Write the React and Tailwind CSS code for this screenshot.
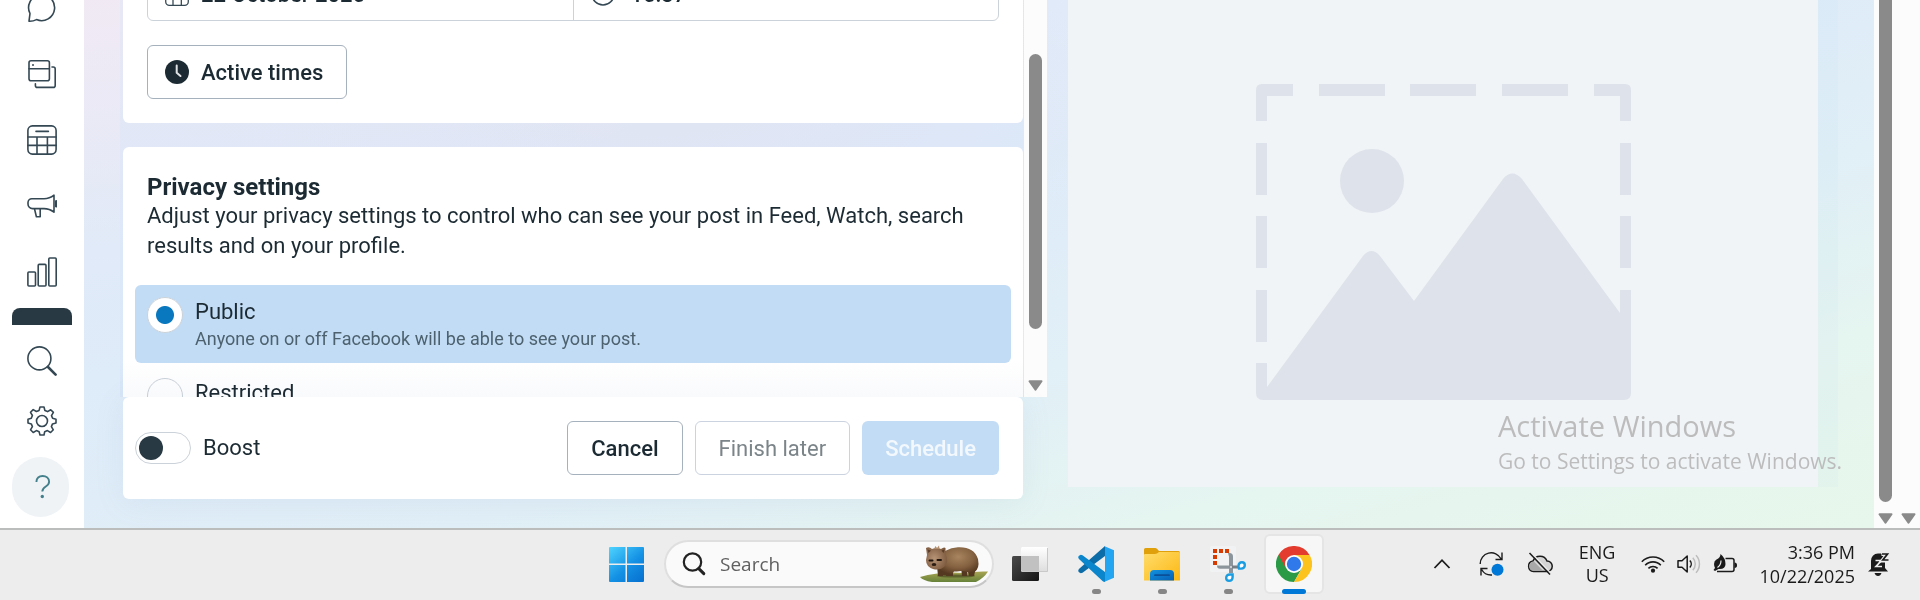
import React from "react";

const line = { fill: "none", stroke: "#344854", strokeWidth: 1.6, strokeLinejoin: "round", strokeLinecap: "round" };

function ChatIcon() {
  return (
    <svg width="30" height="30" viewBox="0 0 30 30" {...line}>
      <path d="M2 28.2 3 20.5A13 13 0 1 1 9.5 26.6Q6 28.4 2 28.2Z" />
    </svg>
  );
}
function WindowsIcon() {
  return (
    <svg width="30" height="30" viewBox="0 0 30 30" {...line}>
      <rect x="2" y="1.8" width="20.4" height="20" rx="2" />
      <path d="M2 9.8h20.4M25 8h1.2a2 2 0 0 1 2 2v16.4a2 2 0 0 1-2 2H10.4a2 2 0 0 1-2-2v-1.6" />
      <circle cx="6" cy="6" r="1" fill="#344854" stroke="none" />
    </svg>
  );
}
function CalendarIcon({ size }) {
  return (
    <svg width={size} height={size} viewBox="0 0 30 30" className="shrink-0" {...line}>
      <rect x="0.9" y="0.9" width="28.2" height="28.2" rx="4.5" />
      <path d="M0.9 12h28.2M0.9 20.4h28.2M10 12v17M20.4 12v17M9 6.4h12.4" />
    </svg>
  );
}
function MegaphoneIcon() {
  return (
    <svg width="30" height="30" viewBox="0 0 30 30" {...line}>
      <path d="M27 4.2V21.200Q22.500 17.600 17 17.600H5.500A4.500 4.500 0 0 1 1 13V11.500A3.800 3.800 0 0 1 4.800 7.800H17Q22.500 7.800 27 4.200Z" />
      <path d="M7.600 18.200 9.400 25.800H13.200V18.200" />
      <path d="M29.200 10.200v5" strokeWidth="2.400" />
    </svg>
  );
}
function BarsIcon() {
  return (
    <svg width="30" height="30" viewBox="0 0 30 30" {...line}>
      <rect x="0.9" y="15" width="7.600" height="14" rx="1" />
      <rect x="11.200" y="7.400" width="7.800" height="21.600" rx="1" />
      <rect x="21.800" y="1" width="7.400" height="28" rx="1" />
    </svg>
  );
}
function FindIcon() {
  return (
    <svg width="30" height="30" viewBox="0 0 30 30" {...line}>
      <circle cx="12.400" cy="12.400" r="11.500" />
      <path d="M21 21 28.600 28.600" strokeWidth="2.600" />
    </svg>
  );
}
function GearIcon() {
  return (
    <svg width="30" height="30" viewBox="0 0 30 30" {...line}>
      <circle cx="15" cy="15" r="5.500" />
      <path d="M13 1h4l.9 3.500 2.700 1.100 3.100-1.900 2.700 2.700-1.900 3.200 1.100 2.700L29 13.200v3.800l-3.500.9-1.100 2.700 1.900 3.200-2.700 2.700-3.200-1.900-2.700 1.100L17 29h-4l-.9-3.300-2.700-1.100-3.200 1.900-2.700-2.700 1.900-3.200-1.100-2.700L1 17v-3.800l3.300-1 1.100-2.700-1.900-3.200 2.700-2.700 3.200 1.900 2.700-1.100Z" />
    </svg>
  );
}
function QuestionIcon() {
  return (
    <svg width="16" height="24" viewBox="0 0 16 24" fill="none" stroke="#43808b" strokeWidth="1.900">
      <path d="M1.400 7C1.400 3 4 1 7.600 1s6.500 2.200 6.500 5.800c0 5.400-6.800 4-6.800 9.800" />
      <circle cx="7.300" cy="21.500" r="1.700" fill="#43808b" stroke="none" />
    </svg>
  );
}
function SolidClock() {
  return (
    <svg width="24" height="24" viewBox="0 0 24 24">
      <circle cx="12" cy="12" r="12" fill="#1c2b33" />
      <path d="M11.700 5.500v7.200l3.800 3.300" fill="none" stroke="#dfe3e6" strokeWidth="2" strokeLinecap="round" strokeLinejoin="round" />
    </svg>
  );
}
function OutlineClock() {
  return (
    <svg width="24" height="24" viewBox="0 0 24 24" className="shrink-0" {...line}>
      <circle cx="12" cy="12" r="11" />
      <path d="M12 5.500V12l4 3" />
    </svg>
  );
}
function DownArrow() {
  return (
    <svg width="15" height="11" viewBox="0 0 15 11">
      <path d="M1.500 1.200h12L7.500 9.600Z" fill="#8a8a8a" stroke="#8a8a8a" strokeWidth="2" strokeLinejoin="round" />
    </svg>
  );
}

function Placeholder() {
  return (
    <svg viewBox="0 0 375 316" className="w-1/2" aria-hidden="true">
      <g fill="#dee2ea">
        <path d="M0 37V6Q0 0 6 0H37V12H11V37Z" />
        <path d="M375 37V6Q375 0 369 0H338V12H364V37Z" />
        <path d="M63 0h66v12H63zM154 0h66v12h-66zM246 0h66v12h-66z" />
        <path d="M0 59h11v52H0zM0 132h11v52H0zM0 206h11v52H0z" />
        <path d="M364 59h11v52h-11zM364 132h11v52h-11z" />
        <circle cx="116" cy="97" r="32" />
        <path d="M0 279H11V303L107 172Q115.500 162 124 172L158 217 247 95Q256 84 266 95L364 229V206H375V309Q375 316 368 316H7Q0 316 0 309Z" />
      </g>
    </svg>
  );
}

function StartLogo() {
  return (
    <svg width="35" height="35" viewBox="0 0 35 35">
      <defs>
        <linearGradient id="start" gradientUnits="userSpaceOnUse" x1="0" y1="0" x2="30" y2="35">
          <stop offset="0" stopColor="#4fd4ff" />
          <stop offset="0.6" stopColor="#1390e4" />
          <stop offset="1" stopColor="#0874d2" />
        </linearGradient>
      </defs>
      <path fill="url(#start)" d="M1 0H16.500V16.500H0V1Q0 0 1 0ZM18 0H34Q35 0 35 1V16.500H18ZM0 18H16.500V35H1Q0 35 0 34ZM18 18H35V34Q35 35 34 35H18Z" />
    </svg>
  );
}
function Lens() {
  return (
    <svg width="24" height="24" viewBox="0 0 24 24" fill="none" stroke="#222" strokeWidth="2.200" strokeLinecap="round">
      <circle cx="10.500" cy="10" r="8.700" />
      <path d="M16.800 16.600 21.800 21.600" strokeWidth="3" />
    </svg>
  );
}
function Wombat() {
  return (
    <svg width="68" height="38" viewBox="0 0 68 38">
      <defs>
        <radialGradient id="fur" cx="0.5" cy="0.35" r="0.65">
          <stop offset="0" stopColor="#a98560" />
          <stop offset="0.6" stopColor="#83603f" />
          <stop offset="1" stopColor="#553820" />
        </radialGradient>
        <radialGradient id="face" cx="0.4" cy="0.5" r="0.65">
          <stop offset="0" stopColor="#b79476" />
          <stop offset="1" stopColor="#7a573b" />
        </radialGradient>
        <linearGradient id="grass" x1="0" y1="0" x2="0" y2="1">
          <stop offset="0" stopColor="#a9a552" />
          <stop offset="1" stopColor="#66813a" />
        </linearGradient>
      </defs>
      <path d="M0 32Q20 26 44 28 56 26 68 26.500 64 33 56 37H12Q3 35.500 0 32Z" fill="url(#grass)" />
      <ellipse cx="36" cy="31" rx="19" ry="1.600" fill="#4a4a22" opacity="0.7" />
      <path d="M24 22h9v9h-7zM47 22h9l-2 9h-5zM17 21h6v10h-5zM41 22h6v9h-5z" fill="#553820" />
      <path d="M18 14Q24 3 38 2.200 54 1.500 58 14 60 24 54 27.500H48Q45 25.500 41 26 36 26.500 34 26.500 32 30 28 30H18Z" fill="url(#fur)" />
      <path d="M7 10 6 3Q9 1 12 4Q17 2 21 4Q24 1.500 25.500 3L25.500 9Q29 16 25 21 20 26 13 24 6 21.500 6 15Z" fill="url(#face)" />
      <path d="M7.500 4.500 8.500 8 11 5.500ZM24.500 4.500 23.500 8 21.500 5.500Z" fill="#5a3c28" />
      <path d="M14 4l1.500-3 1.500 2 2-2.500.5 3.500Z" fill="#b28d6c" />
      <path d="M9.500 15.500h3M17.500 15h3.500" stroke="#20150e" strokeWidth="2" strokeLinecap="round" />
      <ellipse cx="14" cy="19.500" rx="2.300" ry="1.600" fill="#2b1c13" />
    </svg>
  );
}
function TaskView() {
  return (
    <svg width="36" height="36" viewBox="0 0 36 36">
      <defs>
        <linearGradient id="tvDark" x1="0" y1="0" x2="1" y2="1">
          <stop offset="0" stopColor="#4a4a4a" />
          <stop offset="1" stopColor="#141414" />
        </linearGradient>
        <linearGradient id="tvLight" x1="0" y1="0" x2="0" y2="1">
          <stop offset="0" stopColor="#ffffff" />
          <stop offset="1" stopColor="#dddddd" />
        </linearGradient>
      </defs>
      <rect x="0" y="10" width="27" height="25" rx="1.500" fill="url(#tvDark)" />
      <rect x="9" y="1" width="27" height="25" rx="1.500" fill="url(#tvLight)" />
      <path d="M9 10h18v15H10.500Q9 25 9 23.500Z" fill="#c1c1c1" />
      <path d="M10 25.500h25.500V2" fill="none" stroke="#c9c9c9" />
    </svg>
  );
}
function CodeLogo() {
  return (
    <svg width="36" height="36" viewBox="0 0 36 36">
      <path d="M27 0 1.200 22.800Q-.6 24.800 1 26.300L2.800 27.200 4.500 26.700 27 10Z" fill="#0b6ca8" />
      <path d="M1.200 13.200Q-.6 11.200 1 9.700L2.800 8.800 4.500 9.300 27 26V36Q25.500 36 24.500 35Z" fill="#0b86cc" />
      <path d="M26 0 36 4.200V31.800L26 36 27 35V1Z" fill="#24a5f2" />
    </svg>
  );
}
function FolderLogo() {
  return (
    <svg width="36" height="36" viewBox="0 0 36 36">
      <defs>
        <linearGradient id="folder" x1="0" y1="0" x2="1" y2="1">
          <stop offset="0" stopColor="#ffdc6b" />
          <stop offset="1" stopColor="#fcb813" />
        </linearGradient>
        <linearGradient id="tray" x1="0" y1="0" x2="1" y2="1">
          <stop offset="0" stopColor="#1292e0" />
          <stop offset="1" stopColor="#0660b5" />
        </linearGradient>
      </defs>
      <path d="M0 3.500Q0 2 1.500 2H11.500Q12.800 2 15 5H34.500Q36 5 36 6.500V12H0Z" fill="#e0a00c" />
      <path d="M0 9Q0 8 1 8H11Q13 8 15 6H35Q36 6 36 7V34.500H0Z" fill="url(#folder)" />
      <path d="M6 34.500V28Q6 24 10 24H26Q30 24 30 28V34.500Z" fill="url(#tray)" />
      <path d="M11 29.200h14" stroke="#0a4f98" strokeWidth="1.800" strokeLinecap="round" />
    </svg>
  );
}
function SnipLogo() {
  return (
    <svg width="36" height="36" viewBox="0 0 36 36">
      <rect x="0" y="0" width="26" height="26" rx="2" fill="#f1f2f3" />
      <g fill="#d83b01">
        <path d="M3 3h4v4H3zM9 3h4v4H9zM15 3h4v4h-4zM3 9h4v4H3zM3 15h4v4H3z" />
      </g>
      <path d="M18 7h1.500Q23 7 23 10.500V27h-4V22.800H10Q7 22.800 7 19.500H19V10.500Z" fill="#8d959c" />
      <path d="M22 19.500h7v3h-7z" fill="#767e86" />
      <circle cx="21" cy="21" r="1" fill="#dfe3e6" />
      <g fill="#fff" stroke="#1b9de2" strokeWidth="2.400">
        <path d="M28.500 20.500Q28.500 16.200 32 16.200 34.800 16.200 34.800 19 34.800 22.600 31 22.600H29Z" />
        <path d="M20 28.500Q16.200 28.500 16.200 32 16.200 34.800 19 34.800 22.600 34.800 22.600 31V28.500Z" />
      </g>
    </svg>
  );
}
function ChromeLogo() {
  return (
    <svg width="36" height="36" viewBox="0 0 36 36">
      <path d="M2.400 9A18 18 0 0 0 18 36L25.800 22.500 18 18Z" fill="#2a9a47" />
      <path d="M18 9H33.600A18 18 0 0 1 18 36L25.800 22.500Z" fill="#fcc31e" />
      <path d="M10.200 22.500 2.400 9A18 18 0 0 1 33.600 9H18Z" fill="#e33b2e" />
      <circle cx="18" cy="18" r="9" fill="#fff" />
      <circle cx="18" cy="18" r="7.200" fill="#3079ea" />
    </svg>
  );
}
function ChevronUp() {
  return (
    <svg width="18" height="12" viewBox="0 0 18 12" fill="none" stroke="#1b1b1b" strokeWidth="1.800">
      <path d="M1.500 10 9 2.200 16.500 10" />
    </svg>
  );
}
function SyncIcon() {
  return (
    <svg width="26" height="26" viewBox="0 0 26 26" fill="none" stroke="#1b1b1b" strokeWidth="1.400">
      <path d="M1.200 13A11 11 0 0 1 22 7.800M23 1.500V8.500H16.500M8.500 17.500H2V24.500M2.600 18.500A11 11 0 0 0 13 24" />
      <circle cx="18.500" cy="18.800" r="6" fill="#0078d7" stroke="none" />
    </svg>
  );
}
function CloudOff() {
  return (
    <svg width="26" height="26" viewBox="0 0 26 26" fill="none" stroke="#1b1b1b" strokeWidth="1.500">
      <path d="M6.500 20.500A5.300 5.300 0 0 1 6 10 7.500 7.500 0 0 1 20 10 5.200 5.200 0 0 1 20 20.500Z" fill="#d5d5d5" />
      <path d="M6.500 19.800A4.600 4.600 0 0 1 7 10.600L16 19.800Z" fill="#a8a8a8" stroke="none" />
      <path d="M3.500 1 24 22.500" stroke="#ededed" strokeWidth="1.500" />
      <path d="M2.500 2 23 23.500" />
    </svg>
  );
}
function WifiIcon() {
  return (
    <svg width="24" height="18" viewBox="0 0 24 18" fill="none" stroke="#1b1b1b" strokeWidth="1.600">
      <path d="M.8 6.800A15.600 15.600 0 0 1 23.200 6.800M4.200 10.200A10.800 10.800 0 0 1 19.800 10.200M7.400 13.400A6.400 6.400 0 0 1 16.600 13.400" />
      <circle cx="12" cy="15.700" r="2.100" fill="#1b1b1b" stroke="none" />
    </svg>
  );
}
function SpeakerIcon() {
  return (
    <svg width="24" height="20" viewBox="0 0 24 20" fill="none" stroke="#1b1b1b" strokeWidth="1.500">
      <path d="M1 6.800H5L10.200 2V18L5 13.200H1Z" strokeLinejoin="round" />
      <path d="M12.800 6.500A5 5 0 0 1 12.800 13.500" />
      <path d="M15.800 3.800A9 9 0 0 1 15.800 16.200M19 1.200A13 13 0 0 1 19 18.800" stroke="#bdbdbd" />
    </svg>
  );
}
function BatteryIcon() {
  return (
    <svg width="24" height="20" viewBox="0 0 24 20" fill="none" stroke="#1b1b1b" strokeWidth="1.500">
      <path d="M12.500 4.500H19Q21 4.500 21 6.500V15.500Q21 17.500 19 17.500H4" />
      <path d="M21.500 8.500Q24 8.500 24 11.200T21.500 14Z" fill="#1b1b1b" stroke="none" />
      <path d="M7.500 0Q12.500 4 12.500 10 12.500 15.500 5.500 15L2 17 .5 16 2 14Q-.5 8 3.500 5.500 7.500 3.500 7.500 0Z" fill="#1b1b1b" stroke="none" />
      <path d="M8 6.500Q8 11 4.500 13.500" stroke="#ededed" strokeWidth="1.200" />
    </svg>
  );
}
function BellIcon() {
  return (
    <svg width="22" height="24" viewBox="0 0 22 24">
      <path d="M3 17V9A7 7 0 0 1 10 1.500H13Q17 3 17 9V16L20 19.500H0Z" fill="#1b1b1b" />
      <path d="M6.500 21H13.500Q12.500 24 10 24T6.500 21Z" fill="#1b1b1b" />
      <path d="M7.500 8.500h6L8 14.500h6" fill="none" stroke="#ededed" strokeWidth="1.700" />
      <path d="M13.500 2h6L14.500 8.500h6" fill="none" stroke="#ededed" strokeWidth="4" />
      <path d="M14 2h5.500L14.800 8h5.700" fill="none" stroke="#1b1b1b" strokeWidth="1.700" />
    </svg>
  );
}

const navItems = [
  ["Inbox", <ChatIcon />],
  ["Content", <WindowsIcon />],
  ["Planner", <CalendarIcon size={30} />],
  ["Ads", <MegaphoneIcon />],
  ["Insights", <BarsIcon />],
];

function Sidebar() {
  return (
    <nav className="flex w-[84px] shrink-0 flex-col items-center overflow-hidden bg-white">
      <div className="-mt-[25px] flex flex-col">
        {navItems.map(([label, icon]) => (
          <a key={label} href="#" aria-label={label} className="flex h-[66px] w-[60px] items-center justify-center">
            {icon}
          </a>
        ))}
      </div>
      <div className="mt-[3px] h-[17px] w-[60px] rounded-t-lg bg-[#283943]" />
      <div className="mt-1.5 flex flex-col">
        <a href="#" aria-label="Search" className="flex h-[60px] w-[60px] items-center justify-center"><FindIcon /></a>
        <a href="#" aria-label="Settings" className="flex h-[60px] w-[60px] items-center justify-center"><GearIcon /></a>
        <a href="#" aria-label="Help" className="mt-1.5 flex h-[60px] w-[57px] items-center justify-center rounded-full bg-[#eff3f6] pl-1"><QuestionIcon /></a>
      </div>
    </nav>
  );
}

function Option({ id, label, note, checked }) {
  return (
    <div className={checked ? "flex min-h-[78px] items-start gap-3 rounded-md bg-[#c2dcf5] p-3" : "flex min-h-[78px] items-start gap-3 rounded-md p-3"}>
      <input
        type="radio"
        id={id}
        name="privacy"
        defaultChecked={checked}
        className="h-9 w-9 shrink-0 appearance-none rounded-full border border-[#cbd2d9] checked:bg-white checked:bg-[radial-gradient(circle,#0a78be_8.5px,white_9.5px)]"
      />
      <label htmlFor={id} className="flex flex-col">
        <span className="text-[22px] leading-[30px]">{label}</span>
        {note && <span className="text-[18px] leading-6 text-[#4d626e]">{note}</span>}
      </label>
    </div>
  );
}

function Composer() {
  return (
    <section className="flex min-w-0 flex-[927] flex-col">
      <div className="flex h-[397px] overflow-hidden">
        <div className="relative min-w-0 flex-1 bg-[#d3e6f8]/30 pl-[3px] pr-px">
          <div className="-mt-[57px] rounded-md bg-white p-6">
            <div className="flex h-[54px] rounded-md border border-[#cbd2d9]">
              <label className="flex flex-1 items-center gap-3 px-[17px]">
                <CalendarIcon size={24} />
                <input aria-label="Date" defaultValue="22 October 2025" className="h-[34px] w-full min-w-0 text-[22px] font-medium" />
              </label>
              <label className="flex flex-1 items-center gap-4 border-l border-[#cbd2d9] px-[17px]">
                <OutlineClock />
                <input aria-label="Time" defaultValue="15:37" className="h-[34px] w-full min-w-0 text-[22px] font-medium" />
              </label>
            </div>
            <button className="mt-6 flex h-[54px] items-center gap-3 rounded-md border border-[#a5b1bd] pl-[17px] pr-[23px] text-[22px] font-medium">
              <SolidClock />
              Active times
            </button>
          </div>
          <div className="mt-6 rounded-md bg-white px-3 pt-[26px]">
            <h2 className="px-3 text-2xl leading-7 font-bold">Privacy settings</h2>
            <p className="px-3 text-[22px] leading-[30px]">
              Adjust your privacy settings to control who can see your post in Feed, Watch, search results and on your profile.
            </p>
            <div className="mt-6 flex flex-col gap-[3px]">
              <Option id="public" label="Public" note="Anyone on or off Facebook will be able to see your post." checked />
              <Option id="restricted" label="Restricted" />
            </div>
          </div>
          <div className="pointer-events-none absolute inset-x-0 bottom-0 h-9 bg-gradient-to-b from-white to-[#f9fafc] mix-blend-multiply" />
        </div>
        <div className="flex w-[23px] shrink-0 flex-col items-center bg-[#fcfcfc] pt-[54px]">
          <div className="h-[275px] w-[13px] rounded-full bg-[#8a8a8a]" />
          <div className="mt-[51px]"><DownArrow /></div>
        </div>
      </div>
      <div className="mr-6 ml-[3px] flex items-center gap-3 rounded-md bg-white py-6 pr-6 pl-3 shadow-[0_4px_30px_rgba(120,150,190,0.1)]">
        <label className="mr-auto flex items-center gap-3 text-[22px] leading-[30px]">
          <input
            type="checkbox"
            role="switch"
            className="h-8 w-14 appearance-none rounded-full border border-[#cbd2d9] p-[3px] before:block before:h-6 before:w-6 before:rounded-full before:bg-[#283943]"
          />
          Boost
        </label>
        <button className="h-[54px] rounded-md border border-[#a5b1bd] px-[23px] text-[22px] font-medium">Cancel</button>
        <button disabled className="h-[54px] rounded-md border border-[#cbd2e0] px-[23px] text-[22px] text-[#7b8489]">Finish later</button>
        <button disabled className="h-[54px] rounded-md bg-[#c2dcf5] px-[23px] text-[22px] font-medium text-[#f3f8fd]">Schedule</button>
      </div>
    </section>
  );
}

function Preview() {
  return (
    <section className="relative mb-[41px] flex min-w-0 flex-[750] items-start justify-center bg-[#f0f4f7] pt-[84px] shadow-[20px_0_0_rgba(200,228,240,0.15)]">
      <Placeholder />
      <div className="absolute top-[405px] left-[430px] whitespace-nowrap font-['Open_Sans','Noto_Sans',sans-serif] text-[#bcbcbc]">
        <p className="text-[29px] leading-[42px]">Activate Windows</p>
        <p className="text-[21px] leading-[28px]">Go to Settings to activate Windows.</p>
      </div>
    </section>
  );
}

function TaskButton({ label, children, state }) {
  return (
    <button
      aria-label={label}
      className={
        state === "active"
          ? "relative flex h-[60px] w-[60px] items-center justify-center rounded-md border-2 border-[#e5e5e5] bg-[#f7f7f7]"
          : "relative flex h-[60px] w-[60px] items-center justify-center"
      }
    >
      {children}
      {state === "open" && <span className="absolute bottom-0 h-[5px] w-[9px] rounded-full bg-[#868686]" />}
      {state === "active" && <span className="absolute -bottom-0.5 h-[5px] w-6 rounded-full bg-[#0078d7]" />}
    </button>
  );
}

function Taskbar() {
  return (
    <footer className="grid h-[72px] grid-cols-[1fr_auto_1fr] items-center border-t-2 border-[#bbbcbc] bg-[#ededed] pb-0.5 font-['Open_Sans','Noto_Sans',sans-serif] text-[#1b1b1b]">
      <div />
      <div className="flex items-center gap-1.5">
        <TaskButton label="Start"><StartLogo /></TaskButton>
        <label className="ml-0.5 flex h-12 w-[330px] items-center gap-3.5 rounded-full border-2 border-[#dfdfdf] border-b-[#c6c6c6] bg-[#fafafa] pr-1 pl-4">
          <Lens />
          <input type="search" placeholder="Search" aria-label="Search" className="min-w-0 flex-1 text-[19px] outline-none placeholder:text-[#606060]" />
          <Wombat />
        </label>
        <TaskButton label="Task view"><TaskView /></TaskButton>
        <TaskButton label="Code editor" state="open"><CodeLogo /></TaskButton>
        <TaskButton label="File Explorer" state="open"><FolderLogo /></TaskButton>
        <TaskButton label="Snipping Tool" state="open"><SnipLogo /></TaskButton>
        <TaskButton label="Chrome" state="active"><ChromeLogo /></TaskButton>
      </div>
      <div className="flex items-center justify-end pr-[30px]">
        <button aria-label="Hidden icons" className="mr-7"><ChevronUp /></button>
        <button aria-label="Sync" className="mr-[22px]"><SyncIcon /></button>
        <button aria-label="Cloud storage" className="mr-[26px]"><CloudOff /></button>
        <button className="mr-[26px] text-center text-[18px] leading-[23px]">ENG<br />US</button>
        <button aria-label="Network, sound and power" className="mr-[22px] flex items-center gap-3">
          <WifiIcon /><SpeakerIcon /><BatteryIcon />
        </button>
        <button className="mr-[13px] text-right text-[18px] leading-6">3:36 PM<br />10/22/2025</button>
        <button aria-label="Notifications"><BellIcon /></button>
      </div>
    </footer>
  );
}

export default function App() {
  return (
    <div className="flex min-h-screen flex-col font-[Roboto,'Noto_Sans',sans-serif] text-[#1c2b33]">
      <main className="flex flex-1">
        <Sidebar />
        <div className="flex min-w-0 flex-1 gap-[21px] bg-[radial-gradient(ellipse_700px_300px_at_0%_-10%,#f3eaf4,transparent),radial-gradient(ellipse_500px_160px_at_32%_20%,#e7e5f2,transparent),linear-gradient(165deg,#e5e8f6_0%,#deebf9_38%,#e1eff7_62%,#e5f5f0_80%,#e8f7eb_100%)] pr-14 pl-9">
          <Composer />
          <Preview />
        </div>
        <div className="flex w-[46px] shrink-0 items-end gap-2 bg-[#fcfcfc] pr-1 pb-1 pl-1">
          <div className="flex h-full flex-col items-center justify-between">
            <div className="h-[502px] w-[13px] rounded-b-full bg-[#8a8a8a]" />
            <DownArrow />
          </div>
          <DownArrow />
        </div>
      </main>
      <Taskbar />
    </div>
  );
}
